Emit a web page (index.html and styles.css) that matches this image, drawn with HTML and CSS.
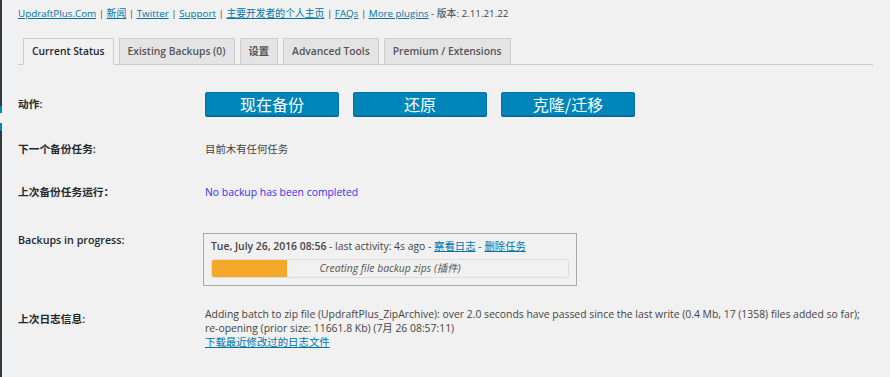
FILE: index.html
```html
<!DOCTYPE html>
<html>
<head>
<meta charset="utf-8">
<title>UpdraftPlus</title>
<link rel="stylesheet" href="styles.css">
</head>
<body>

<div class="page">
<div class="adminEdge"></div>

<div class="wrap">

<div class="topLinks">
<a href="#">UpdraftPlus.Com</a> | <a href="#">新闻</a> | <a href="#">Twitter</a> | <a href="#">Support</a> | <a href="#">主要开发者的个人主页</a> | <a href="#">FAQs</a> | <a href="#">More plugins</a> - 版本: 2.11.21.22
</div>

<div class="tabNav">
<span class="tab tabActive">Current Status</span>
<span class="tab">Existing Backups (0)</span>
<span class="tab">设置</span>
<span class="tab">Advanced Tools</span>
<span class="tab">Premium / Extensions</span>
</div>

<div class="statusTable">

<div class="row rowActions">
<div class="label">动作:</div>
<div class="value buttons">
<button class="bigButton">现在备份</button>
<button class="bigButton">还原</button>
<button class="bigButton">克隆/迁移</button>
</div>
</div>

<div class="row rowNext">
<div class="label">下一个备份任务:</div>
<div class="value">目前木有任何任务</div>
</div>

<div class="row rowLast">
<div class="label">上次备份任务运行：</div>
<div class="value noBackup">No backup has been completed</div>
</div>

<div class="row rowProgress">
<div class="label">Backups in progress:</div>
<div class="value">
<div class="jobBox">
<div class="jobLine">
<b>Tue, July 26, 2016 08:56</b> - last activity: 4s ago - <a href="#">察看日志</a> - <a href="#">删除任务</a>
</div>
<div class="progressBar">
<div class="progressFill" style="width: 21%"></div>
<div class="progressText">Creating file backup zips (插件)</div>
</div>
</div>
</div>
</div>

<div class="row rowLog">
<div class="label">上次日志信息:</div>
<div class="value logText">
Adding batch to zip file (UpdraftPlus_ZipArchive): over 2.0 seconds have passed since the last write (0.4 Mb, 17 (1358) files added so far); re-opening (prior size: 11661.8 Kb) (7月 26 08:57:11)<br>
<a href="#">下载最近修改过的日志文件</a>
</div>
</div>

</div>
</div>
</div>

</body>
</html>
```

FILE: styles.css
```css
body {
    margin: 0;
    background: #f1f1f1;
    color: #444;
    font: 10.4px "Open Sans", "Noto Sans CJK SC", sans-serif;
}
a {
    color: #0073aa;
}
.page {
    display: flex;
    min-height: 377px;
}
.adminEdge {
    width: 2px;
    flex: none;
    background: linear-gradient(to bottom,
        #32373c 0, #32373c 106px,
        #0085ba 106px, #0085ba 113px,
        #f1f1f1 113px, #f1f1f1 123px,
        #0085ba 123px, #0085ba 131px,
        #32373c 131px);
}
.wrap {
    flex: 1;
    padding: 0 17px 0 16px;
}
.topLinks {
    padding-top: 7px;
    line-height: 14px;
    font-size: 9.8px;
    color: #444;
}
.tabNav {
    margin-top: 17px;
    padding-left: 5px;
    border-bottom: 1px solid #ccc;
    display: flex;
    gap: 5px;
    height: 26px;
}
.tab {
    display: inline-block;
    box-sizing: border-box;
    height: 27px;
    padding: 0 8px;
    line-height: 25px;
    font-size: 10.3px;
    font-weight: 600;
    color: #555;
    background: #e4e4e4;
    border: 1px solid #ccc;
}
.tabActive {
    background: #f1f1f1;
    color: #23282d;
    border-bottom-color: #f1f1f1;
}
.row {
    display: flex;
}
.label {
    width: 187px;
    flex: none;
    font-size: 10.7px;
    font-weight: 600;
    color: #23282d;
    line-height: 14px;
}
.value {
    line-height: 14px;
}
.rowActions {
    margin-top: 27px;
    align-items: center;
}
.buttons {
    display: flex;
    gap: 14px;
}
.bigButton {
    width: 134px;
    height: 24px;
    padding: 0;
    background: #0085ba;
    border: 1px solid #0073aa;
    border-radius: 2px;
    box-shadow: 0 1px 0 #006799;
    color: #fff;
    font: 16px "Noto Sans CJK SC", sans-serif;
    line-height: 20px;
}
.rowNext {
    margin-top: 26px;
}
.rowLast {
    margin-top: 29px;
}
.noBackup {
    color: #3b2ff0;
}
.rowProgress {
    margin-top: 34px;
}
.jobBox {
    width: 374px;
    height: 53px;
    margin-left: -2px;
    box-sizing: border-box;
    border: 1px solid #aaa;
    padding: 5px 7px 0 7px;
}
.jobLine b {
    font-weight: 600;
}
.progressBar {
    position: relative;
    margin-top: 6px;
    height: 19px;
    box-sizing: border-box;
    border: 1px solid #ddd;
    border-radius: 3px;
    background: #f1f1f1;
    overflow: hidden;
}
.progressFill {
    height: 100%;
    background: #f6a828;
}
.progressText {
    position: absolute;
    left: 0;
    right: 0;
    top: 0;
    line-height: 17px;
    text-align: center;
    font-style: italic;
    color: #555;
}
.rowLog {
    margin-top: 21px;
}
.rowLog .label {
    padding-top: 5px;
}
```
